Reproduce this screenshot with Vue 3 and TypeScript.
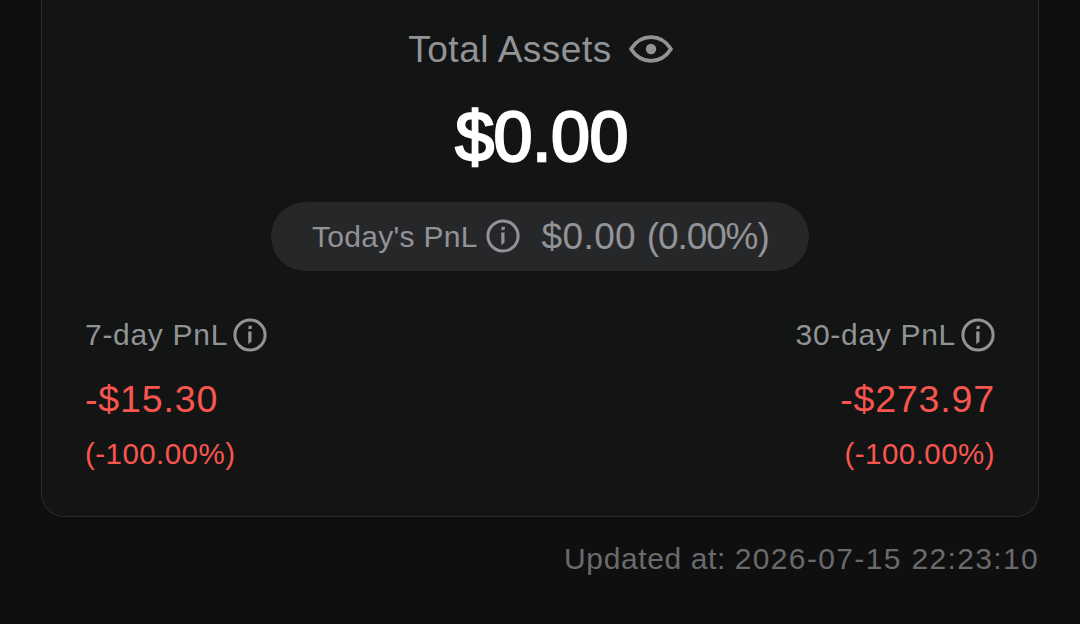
<script setup lang="ts">
interface PnlSummary {
  label: string
  value: string
  percent: string
  side: 'left' | 'right'
}

const summaries: PnlSummary[] = [
  { label: '7-day PnL', value: '-$15.30', percent: '(-100.00%)', side: 'left' },
  { label: '30-day PnL', value: '-$273.97', percent: '(-100.00%)', side: 'right' },
]
</script>

<template>
  <main class="screen">
    <section class="card">
      <div class="title-row">
        <span class="title">Total Assets</span>
        <svg class="eye" viewBox="0 0 46 30" aria-hidden="true">
          <path d="M3 15C8 7.2 15 3.2 23 3.2S38 7.2 43 15C38 22.8 31 26.8 23 26.8S8 22.8 3 15Z" fill="none" stroke="currentColor" stroke-width="3.8" stroke-linejoin="round" />
          <circle cx="23" cy="15" r="5.2" fill="currentColor" />
        </svg>
      </div>
      <div class="amount">$0.00</div>
      <div class="pill">
        <span class="pill-label">Today's PnL</span>
        <svg class="info" viewBox="0 0 34 34" aria-hidden="true">
          <circle cx="17" cy="17" r="15.1" fill="none" stroke="currentColor" stroke-width="3" />
          <path d="M15.7 7.8h3.3l-.5 3.3h-3.2zM15.2 13.4h3.3v10.2l-3.2 2.6z" fill="currentColor" />
        </svg>
        <span class="pill-value">$0.00 <span class="pill-percent">(0.00%)</span></span>
      </div>
      <div class="summaries">
        <div v-for="item in summaries" :key="item.label" class="summary" :class="item.side">
          <div class="label-row">
            <span class="label">{{ item.label }}</span>
            <svg class="info" viewBox="0 0 34 34" aria-hidden="true">
              <circle cx="17" cy="17" r="15.1" fill="none" stroke="currentColor" stroke-width="3" />
              <path d="M15.7 7.8h3.3l-.5 3.3h-3.2zM15.2 13.4h3.3v10.2l-3.2 2.6z" fill="currentColor" />
            </svg>
          </div>
          <div class="value">{{ item.value }}</div>
          <div class="percent">{{ item.percent }}</div>
        </div>
      </div>
    </section>
    <div class="updated"><span class="updated-label">Updated at: </span>2026-07-15 22:23:10</div>
  </main>
</template>

<style>
body {
  background: #0f0f0f;
}
</style>

<style scoped>
.screen {
  box-sizing: border-box;
  width: 1080px;
  height: 624px;
  overflow: hidden;
  padding: 0 41px;
  background: #0f0f0f;
  color: #929397;
  font-family: "Liberation Sans", Arial, sans-serif;
  white-space: nowrap;
}
.card {
  box-sizing: border-box;
  height: 517px;
  padding: 24px 43px 0 43px;
  border: 1px solid #2a2b2b;
  border-top: 0;
  border-radius: 0 0 23px 23px;
  background: #131514;
  display: flex;
  flex-direction: column;
  align-items: center;
}
.title-row {
  display: flex;
  align-items: center;
  height: 50px;
  gap: 16px;
  margin-left: 2px;
}
.title {
  padding-top: 1px;
  font-size: 37px;
  line-height: 50px;
  letter-spacing: 0.5px;
}
.eye {
  width: 46px;
  height: 30px;
}
.amount {
  margin-top: 23px;
  margin-left: 3px;
  font-size: 70px;
  line-height: 80px;
  letter-spacing: -0.5px;
  color: #fff;
  -webkit-text-stroke: 2.4px #fff;
}
.pill {
  box-sizing: border-box;
  display: flex;
  align-items: center;
  width: 538px;
  height: 69px;
  margin-top: 25px;
  padding-left: 41px;
  border-radius: 35px;
  background: #262729;
}
.pill-label {
  width: 173.5px;
  font-size: 30px;
  line-height: 40px;
  letter-spacing: 0.3px;
}
.info {
  flex: none;
  width: 34px;
  height: 34px;
}
.pill .info {
  margin-bottom: 2px;
}
.pill-value {
  margin-left: 22px;
  font-size: 37px;
  line-height: 50px;
  letter-spacing: 0.4px;
}
.pill-percent {
  letter-spacing: -1.1px;
}
.summaries {
  display: flex;
  justify-content: space-between;
  align-self: stretch;
  margin-top: 44px;
}
.summary {
  display: flex;
  flex-direction: column;
}
.right {
  align-items: flex-end;
}
.label-row {
  display: flex;
  align-items: center;
  height: 40px;
  gap: 5px;
}
.label {
  font-size: 30px;
  letter-spacing: 0.7px;
}
.value,
.percent {
  color: #f8554f;
}
.value {
  margin-top: 19px;
  font-size: 37.5px;
  line-height: 50px;
  letter-spacing: 0.85px;
}
.percent {
  margin-top: 10px;
  font-size: 29.5px;
  line-height: 40px;
  letter-spacing: 0.45px;
}
.updated {
  margin-top: 22px;
  font-size: 30px;
  line-height: 40px;
  letter-spacing: 1.35px;
  text-align: right;
  color: #6a6a6d;
}
.updated-label {
  letter-spacing: 0.6px;
}
</style>
